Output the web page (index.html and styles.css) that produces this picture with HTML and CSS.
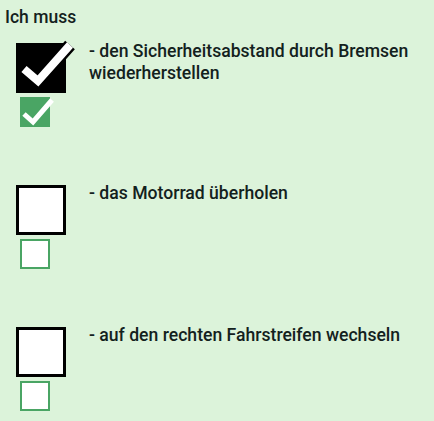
FILE: index.html
```html
<!DOCTYPE html>
<html>
<head>
<meta charset="utf-8">
<link rel="stylesheet" href="styles.css">
</head>
<body>
<div class="page">
  <div class="title">Ich muss</div>
  <div class="row">
    <div class="boxes">
      <div class="big checked">
        <svg class="tick" viewBox="0 0 60 50" width="60" height="50"><path d="M6 30 L20 42 L52 6" fill="none" stroke="#000" stroke-width="13" stroke-linejoin="miter"/><path d="M6 30 L20 42 L52 6" fill="none" stroke="#fff" stroke-width="8"/></svg>
      </div>
      <div class="small checked">
        <svg class="tick-s" viewBox="0 0 36 32" width="36" height="32"><path d="M4 19 L13 27 L32 5" fill="none" stroke="#fff" stroke-width="5"/></svg>
      </div>
    </div>
    <div class="text">- den Sicherheitsabstand durch Bremsen wiederherstellen</div>
  </div>
  <div class="row">
    <div class="boxes">
      <div class="big"></div>
      <div class="small"></div>
    </div>
    <div class="text">- das Motorrad überholen</div>
  </div>
  <div class="row last">
    <div class="boxes">
      <div class="big"></div>
      <div class="small"></div>
    </div>
    <div class="text">- auf den rechten Fahrstreifen wechseln</div>
  </div>
</div>
</body>
</html>
```
FILE: styles.css
```css
html, body {
  margin: 0;
  padding: 0;
  background: #dcf3da;
}
body {
  min-height: 100vh;
  font-family: Roboto, "Noto Sans", sans-serif;
  color: #13211d;
}
.page {
  padding: 6px 0 0 0;
}
.title {
  font-size: 17.5px;
  font-weight: 500;
  padding-left: 5px;
  line-height: 22px;
  margin-bottom: 15px;
}
.row {
  display: flex;
  height: 142px;
}
.row.last {
  height: auto;
}
.boxes {
  display: flex;
  flex-direction: column;
  align-items: flex-start;
  gap: 4px;
  padding-left: 16px;
  width: 73px;
  flex-shrink: 0;
}
.big {
  position: relative;
  width: 50px;
  height: 50px;
  box-sizing: border-box;
  border: 3px solid #000;
  background: #fff;
}
.big.checked {
  background: #000;
}
.small {
  position: relative;
  width: 30px;
  height: 30px;
  box-sizing: border-box;
  border: 2px solid #4aa564;
  background: #fff;
  margin-left: 4px;
}
.small.checked {
  background: #4aa564;
}
.tick {
  position: absolute;
  left: -1px;
  top: -7px;
}
.tick-s {
  position: absolute;
  left: -2px;
  top: -4px;
}
.text {
  font-size: 17.6px;
  font-weight: 500;
  line-height: 22px;
  margin-top: -3px;
}
```
